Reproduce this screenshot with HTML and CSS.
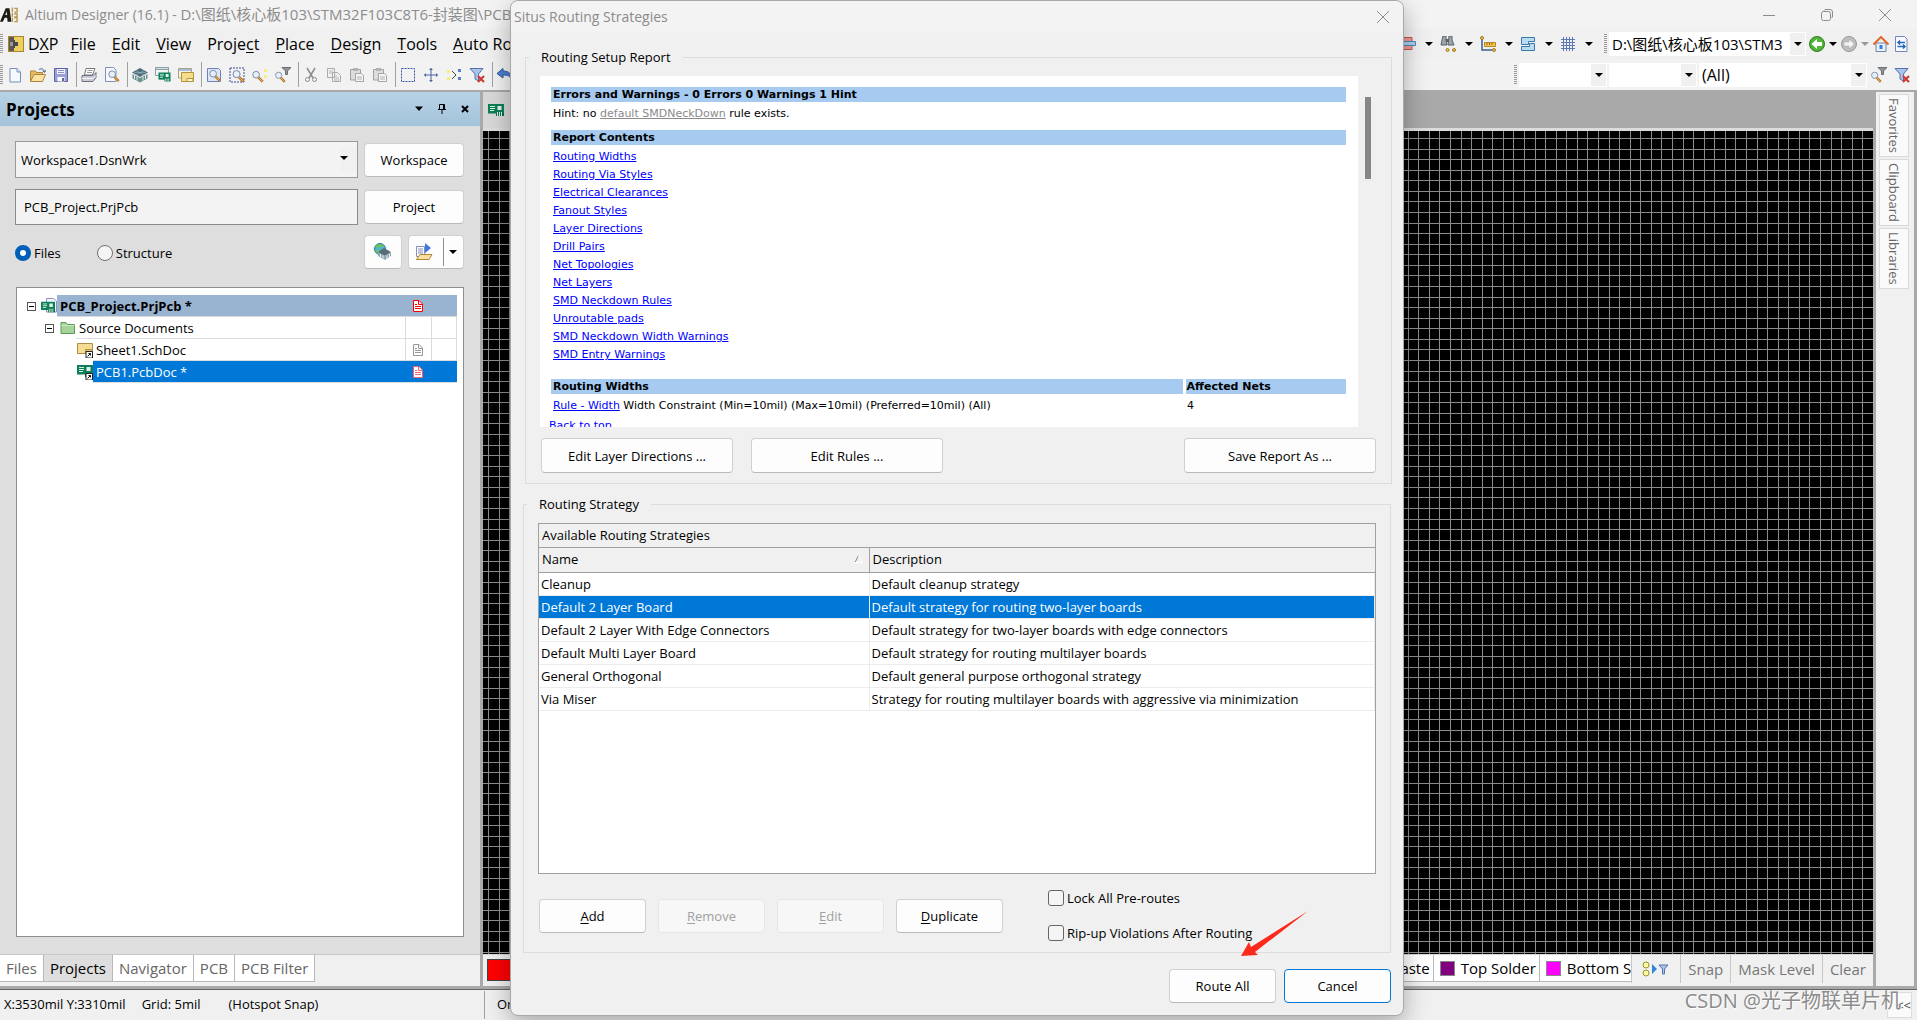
FILE: index.html
```html
<!DOCTYPE html>
<html lang="en">
<head>
    <meta charset="UTF-8">
    <meta name="viewport" content="width=device-width, initial-scale=1">
    <title>Altium Designer (16.1)</title>
    <link rel="stylesheet" href="styles.css">
</head>
<body>
    <!-- icon set -->
    <svg class="sprite" aria-hidden="true">
        <symbol id="i-new" viewBox="0 0 16 16"><path d="M3 1.500h7l3.500 3.500v10H3z" fill="#f4f8ff" stroke="#7a8db8"/><path d="M10 1.500V5h3.500" fill="#dbe5f7" stroke="#7a8db8"/></symbol>
        <symbol id="i-open" viewBox="0 0 16 16"><path d="M.5 14V4h5l1 1.500h6V8" fill="#e6bd66" stroke="#b08538"/><path d="M.5 14.500 4 7.500h11.500l-3 7z" fill="#fbe3a6" stroke="#b08538"/><path d="M9 2.500c3-1.500 5-.5 5.500 2.500M12.500 3.500l2 2 1.500-2.500" fill="none" stroke="#4c6e8f"/></symbol>
        <symbol id="i-save" viewBox="0 0 16 16"><path d="M1.500 1.500h13v13h-13z" fill="#9a9fd6" stroke="#5c61a3"/><path d="M4 2h8v5H4z" fill="#f3f4fb"/><path d="M5 3.500h6M5 5.500h6" stroke="#8d92c7"/><path d="M4.500 10h7v4.500h-7z" fill="#fff"/><path d="M9 11h2v3H9z" fill="#5c61a3"/></symbol>
        <symbol id="i-print" viewBox="0 0 16 16"><path d="M5 1.500h9L11.500 8h-8z" fill="#fff" stroke="#77777f"/><path d="M6.500 3.500h5M6 5.500h5" stroke="#999"/><path d="M1 8.500h11l3-3v5l-3 4H1z" fill="#c9ccd6" stroke="#6f727c"/><path d="M1 11.500h11l3-3" fill="none" stroke="#f5f5f5"/></symbol>
        <symbol id="i-lens" viewBox="0 0 16 16"><path d="m9.500 9.500 5 5" stroke="#b5762a" stroke-width="3"/><path d="m9.500 9.500 4.500 4.500" stroke="#f2bc62"/><circle cx="7" cy="6.500" r="3.800" fill="#e6f1fb" stroke="#70809a"/></symbol>
        <symbol id="i-preview" viewBox="0 0 16 16"><path d="M1.500.5h8L12 3v11.500H1.500z" fill="#f7f9ff" stroke="#8390bb"/><use href="#i-lens" x="2" y="1" width="14" height="15"/></symbol>
        <symbol id="i-stack" viewBox="0 0 16 16"><path d="m8 1 8 4.500L8 10 0 5.500z" fill="#4d6b7b"/><path d="M.5 7 8 11v4.500l-7.500-4zM15.500 7 8 11v4.500l7.500-4z" fill="#6d9290"/><path d="M2.500 8v4M5 9.500v4M11 9.500v4M13.500 8v4" stroke="#d9e8e6"/><path d="m4 3.500 8 4.500M12 3.500 4 8M2 5.500h12" stroke="#8fb0bd" stroke-width=".7"/></symbol>
        <symbol id="i-board" viewBox="0 0 16 16"><path d="M0 2h16v9.500H0z" fill="#0d7e57"/><path d="M2 4.500h5M2 6.500h5M2 8.500h4" stroke="#d7f4e3"/><path d="M9.500 4h4v4h-4z" fill="#e1f0e6"/><path d="M8 11h8v3H8z" fill="#0a6849"/><path d="M9.500 10v4M11.500 10v4M13.500 10v4" stroke="#d7f4e3"/></symbol>
        <symbol id="i-pcbview" viewBox="0 0 16 16"><path d="M.5.5h13v8H.5z" fill="#f2f5f5" stroke="#8fa0a5"/><path d="M.5.500h13v2H.5z" fill="#cfdde6" stroke="#8fa0a5"/><use href="#i-board" x="3" y="4" width="13" height="12"/></symbol>
        <symbol id="i-sheets" viewBox="0 0 16 16"><path d="M.5 1.500h13V11H.5z" fill="#f7f4e4" stroke="#a7a08a"/><path d="M1 2h12v2H1z" fill="#a9bfd6"/><path d="M3.500 5.500h12v9h-12z" fill="#f5dd8c" stroke="#b3943a"/><path d="M9 11.500h6v3H9z" fill="#fff6cf" stroke="#b3943a"/></symbol>
        <symbol id="i-zoomdoc" viewBox="0 0 16 16"><path d="M1.500 1.500h11l2 2v11h-13z" fill="#dbe6f7" stroke="#6f84b5"/><use href="#i-lens" x="1" y="1" width="14" height="14"/></symbol>
        <symbol id="i-zoomsel" viewBox="0 0 16 16"><path d="M1 1h14v14H1z" fill="none" stroke="#3b4f96" stroke-dasharray="2 1"/><use href="#i-lens" x="1" y="1" width="15" height="15"/></symbol>
        <symbol id="i-zoomobj" viewBox="0 0 16 16"><use href="#i-lens" x="-2" y="2" width="14" height="14"/><path d="M12 2h3v3h-3zM12 8h3v3h-3z" fill="#f6ef7e"/></symbol>
        <symbol id="i-zoomfilter" viewBox="0 0 16 16"><path d="M7 .5h9L12.500 4v3.500l-2 0V4z" fill="#8f9499" stroke="#6c7075"/><use href="#i-lens" x="-2" y="3" width="13" height="13"/></symbol>
        <symbol id="i-cut" viewBox="0 0 16 16"><path d="m4 1 6 10M12 1 6 11" stroke="#8c8c8c" stroke-width="1.500"/><circle cx="4.500" cy="12.500" r="2" fill="none" stroke="#8c8c8c"/><circle cx="11.500" cy="12.500" r="2" fill="none" stroke="#8c8c8c"/></symbol>
        <symbol id="i-copy" viewBox="0 0 16 16"><path d="M1.500 1.500h7v9h-7zM6.500 5.500h5l3 3v6h-8z" fill="#f1f1f1" stroke="#ababab"/><path d="M3 4h4M3 6h3M8 9h3M8 11h5M8 13h5" stroke="#b5b5b5"/></symbol>
        <symbol id="i-paste" viewBox="0 0 16 16"><path d="M1.500 2.500h10V13h-10z" fill="#ddd" stroke="#a0a0a0"/><path d="M4 1h5v3H4z" fill="#b3b3b3"/><path d="M6.500 6.500h6l2 2v6h-8z" fill="#f4f4f4" stroke="#a5a5a5"/><path d="M8 10h5M8 12h5" stroke="#b5b5b5"/></symbol>
        <symbol id="i-select" viewBox="0 0 16 16"><path d="M1.500 1.500h13v13h-13z" fill="none" stroke="#3d55a0" stroke-dasharray="2 1"/></symbol>
        <symbol id="i-move" viewBox="0 0 16 16"><path d="M8 1.500v13M1.500 8h13" stroke="#4a62a8"/><path d="m8 1-2 2h4zM8 15l-2-2h4zM1 8l2-2v4zM15 8l-2-2v4z" fill="#4a62a8"/></symbol>
        <symbol id="i-desel" viewBox="0 0 16 16"><path d="M1 3h3v3H1zM1 10h3v3H1z" fill="#f6ef7e"/><path d="m6 4 4 4-4 4" fill="none" stroke="#444"/><path d="M12 2h3v3h-3zM12 10h3v3h-3z" fill="#5b7fc0"/></symbol>
        <symbol id="i-nofilter" viewBox="0 0 16 16"><path d="M1 1.500h13L9.500 7v7L6 12V7z" fill="#a9c4ea" stroke="#5472ad"/><path d="m9 9 6 6M15 9l-6 6" stroke="#d2352c" stroke-width="2"/></symbol>
        <symbol id="i-undo" viewBox="0 0 16 16"><path d="M0 6.500 6 1.500V4c6 0 9 3 9 9-2-4-4-5-9-5v3z" fill="#4c7ed0" stroke="#2d5aa5"/></symbol>
        <symbol id="i-align" viewBox="0 0 16 16"><path d="M0 1.500h12v12H0z" fill="#f09a94" stroke="#c8534e"/><path d="M0 5.500h15.500v4H0z" fill="#a9d1ee" stroke="#4b8ab8"/></symbol>
        <symbol id="i-find" viewBox="0 0 16 16"><path d="M3 0h3v4l1 5H1l1-5zM9 0h3v4l2 5H8z" fill="#9aa4aa" stroke="#59636a"/><path d="M6 3h3v3H6z" fill="#59636a"/><circle cx="7.500" cy="14" r="1.500" fill="#e8c15a" stroke="#a37a1c"/><circle cx="14" cy="14" r="1.500" fill="#e8c15a" stroke="#a37a1c"/></symbol>
        <symbol id="i-dim" viewBox="0 0 16 16"><path d="M2 3v11h11" fill="none" stroke="#3f5f94" stroke-width="1.500"/><path d="M4.500 6.500h11v4h-11z" fill="#f6c84f" stroke="#b58722"/><path d="M7 7v2M9.500 7v2M12 7v2" stroke="#8a6412"/><circle cx="2" cy="2" r="1.500" fill="#e8c15a" stroke="#a37a1c"/><circle cx="14" cy="14" r="1.500" fill="#e8c15a" stroke="#a37a1c"/></symbol>
        <symbol id="i-room" viewBox="0 0 16 16"><path d="M1.500 1.500h13v4h-6v3h-7zM14.500 7.500v7h-13v-4h8v-3z" fill="#b7dcf2" stroke="#3f78a8"/></symbol>
        <symbol id="i-grid" viewBox="0 0 16 16"><path d="M3.500 1v14M6.500 1v14M9.500 1v14M12.500 1v14M1 3.500h14M1 6.500h14M1 9.500h14M1 12.500h14" stroke="#5a78b4"/></symbol>
        <symbol id="i-back" viewBox="0 0 16 16"><circle cx="8" cy="8" r="7.500" fill="#52b43a" stroke="#2c7f1d"/><path d="M2.500 8 8 3v3h5v4H8v3z" fill="#fff"/></symbol>
        <symbol id="i-fwd" viewBox="0 0 16 16"><circle cx="8" cy="8" r="7.500" fill="#bdbdbd" stroke="#999"/><path d="M13.500 8 8 3v3H3v4h5v3z" fill="#f3f3f3" stroke="#a5a5a5" stroke-width=".5"/></symbol>
        <symbol id="i-home" viewBox="0 0 16 16"><path d="M3 7h10v8.500H3z" fill="#eaf1fa" stroke="#6c86a8"/><path d="M6.500 9h3v4h-3z" fill="#2c7fe0"/><path d="M.5 8.500 8 1l7.500 7.500" fill="none" stroke="#e0682b" stroke-width="2"/></symbol>
        <symbol id="i-sync" viewBox="0 0 16 16"><path d="M2.500.500h9l2.500 2.500v12.500h-11.500z" fill="#f6f9ff" stroke="#7588b5"/><path d="M5 6.500h7M7 4.500l-2 2 2 2M4.500 10.500H12M10 8.500l2 2-2 2" fill="none" stroke="#2868b8" stroke-width="1.500"/></symbol>
        <symbol id="i-doc" viewBox="0 0 10 12"><path d="M.500.500H6L9.500 4v7.500h-9z" fill="#fff" stroke="currentColor"/><path d="M5.500 1v3.500H9M2 4.500h2M2 6.500h6M2 8.500h6" fill="none" stroke="currentColor"/></symbol>
        <symbol id="i-folder" viewBox="0 0 16 16"><path d="M1 13.500V2.500h5l1.500 2h7v9z" fill="#a5d39a" stroke="#5f9a5c"/><path d="M1.500 5.500h13" stroke="#cdebc5"/></symbol>
        <symbol id="i-sch" viewBox="0 0 16 16"><path d="M.5 1.500h15v10H.5z" fill="#f4dd92" stroke="#ad8f46"/><path d="M8.500 7.500h7v4h-7z" fill="#e6c56a" stroke="#ad8f46"/><use href="#i-link"/></symbol>
        <symbol id="i-pcb" viewBox="0 0 16 16"><use href="#i-board" x="0" y="-1" width="16" height="16"/><use href="#i-link"/></symbol>
        <symbol id="i-link" viewBox="0 0 16 16"><path d="M9 9.500h6.500V16H9z" fill="#fff" stroke="#222"/><path d="M10.500 14.500 13.500 11.500M11.500 11.500h2v2" fill="none" stroke="#111"/></symbol>
        <symbol id="i-prj" viewBox="0 0 16 16"><path d="M5.500.500h7L15.500 3v11h-10z" fill="#f4f6ff" stroke="#8a93bb"/><use href="#i-board" x="0" y="2" width="14" height="14"/></symbol>
        <symbol id="i-vault" viewBox="0 0 18 18"><circle cx="6" cy="6" r="5.500" fill="#52b6c4" stroke="#2b7e90"/><path d="M2 4c3-3 4 0 7-2M2 8c2 1 3-1 4 2" stroke="#79c34c" stroke-width="2" fill="none"/><path d="m10 5 7 4-6 4-7-4z" fill="#586d78"/><path d="m4 9 7 4v4l-7-4zM17 9l-6 4v4l6-4z" fill="#8fa9b2"/><path d="M6.500 11v3M9 12.500v3M13 12.500v3M15.500 11v3" stroke="#e8f0f2"/></symbol>
        <symbol id="i-export" viewBox="0 0 18 18"><path d="M1.500 3.500h8v10h-8z" fill="#fff" stroke="#8390bb"/><path d="M3 6h5M3 8h5M3 10h5" stroke="#8390bb"/><path d="m10 0 6 5-6 5z" fill="#3f78e0"/><path d="M1.500 16.500 5 11.500h12l-3 5z" fill="#fbe0a0" stroke="#b08538"/></symbol>
        <symbol id="i-mask" viewBox="0 0 28 16"><circle cx="4" cy="4" r="3" fill="#fbfba5" stroke="#97972a"/><circle cx="4" cy="12" r="3" fill="#fbfba5" stroke="#97972a"/><path d="m10 3 5 5-5 5z" fill="#2f86d8"/><path d="M17 4h9l-3.500 4v5h-2V8z" fill="#a9c4ea" stroke="#5472ad"/></symbol>
    </svg>

    <div class="app">
        <header class="titlebar">
            <svg class="logo" viewBox="0 0 20 18"><path d="M0 16 6 2h4l2 14H8l-.5-4H5l-2 4z" fill="#1d1a12"/><path d="M5.500 9h2L7 5z" fill="#f3f3f3"/><path d="M13 1v5M15 2h3v4h-3M13 7v4M15 8h3v3h-3M13 12v4M15 12h3v4h-3" fill="none" stroke="#b79850" stroke-width="1.500"/></svg>
            <h1>Altium Designer (16.1) - <span>D:\图纸\核心板103\STM32F103C8T6-封装图\PCB</span></h1>
            <div class="win-controls">
                <button aria-label="Minimize"><svg viewBox="0 0 12 12"><path d="M0 6.500h12"/></svg></button>
                <button aria-label="Restore"><svg viewBox="0 0 12 12"><rect x=".5" y="2.500" width="9" height="9" rx="2"/><path d="M3 1.500Q3.500.5 5 .5h4q2.500 0 2.500 2.500v4q0 1.500-1 2"/></svg></button>
                <button aria-label="Close"><svg viewBox="0 0 12 12"><path d="m0 0 12 12M12 0 0 12"/></svg></button>
            </div>
        </header>

        <div class="menubar">
            <span class="grip"></span>
            <svg class="dxp-icon" viewBox="0 0 16 16"><path d="M0 0h16v16H0z" fill="#a8862a"/><path d="M1 1h5v14H1z" fill="#5a5a5a"/><path d="M6 1h9v14H6z" fill="#edcf60"/><path d="M2 6h3v4H2z" fill="#999"/><path d="M5 4h2v2h3v4H7v2H5z" fill="#4a4a4a"/></svg>
            <nav class="menu">
                <a href="#">D<u>X</u>P</a>
                <a href="#"><u>F</u>ile</a>
                <a href="#"><u>E</u>dit</a>
                <a href="#"><u>V</u>iew</a>
                <a href="#">Proje<u>c</u>t</a>
                <a href="#"><u>P</u>lace</a>
                <a href="#"><u>D</u>esign</a>
                <a href="#"><u>T</u>ools</a>
                <a href="#"><u>A</u>uto Route</a>
            </nav>
            <div class="tools tools-wide">
                <button class="drop" aria-label="Align"><svg><use href="#i-align"/></svg><i class="caret"></i></button>
                <button class="drop" aria-label="Find"><svg><use href="#i-find"/></svg><i class="caret"></i></button>
                <button class="drop" aria-label="Dimension"><svg><use href="#i-dim"/></svg><i class="caret"></i></button>
                <button class="drop" aria-label="Room"><svg><use href="#i-room"/></svg><i class="caret"></i></button>
                <button class="drop" aria-label="Grid"><svg><use href="#i-grid"/></svg><i class="caret"></i></button>
            </div>
            <span class="grip"></span>
            <span class="combo combo-path"><select aria-label="Document path"><option>D:\图纸\核心板103\STM3</option></select></span>
            <div class="nav-tools">
                <button aria-label="Back"><svg><use href="#i-back"/></svg></button><i class="caret"></i>
                <button aria-label="Forward"><svg><use href="#i-fwd"/></svg></button><i class="caret dim"></i>
                <button aria-label="Home"><svg><use href="#i-home"/></svg></button>
                <button aria-label="Refresh"><svg><use href="#i-sync"/></svg></button>
            </div>
        </div>

        <div class="toolbar">
            <span class="grip"></span>
            <div class="tools">
                <button aria-label="New"><svg><use href="#i-new"/></svg></button>
                <button aria-label="Open"><svg><use href="#i-open"/></svg></button>
                <button aria-label="Save"><svg><use href="#i-save"/></svg></button>
                <span class="sep"></span>
                <button aria-label="Print"><svg><use href="#i-print"/></svg></button>
                <button aria-label="Preview"><svg><use href="#i-preview"/></svg></button>
                <span class="sep"></span>
                <button aria-label="Devices"><svg><use href="#i-stack"/></svg></button>
                <button aria-label="PCB view"><svg><use href="#i-pcbview"/></svg></button>
                <button aria-label="Sheets"><svg><use href="#i-sheets"/></svg></button>
                <span class="sep"></span>
                <button aria-label="Fit document"><svg><use href="#i-zoomdoc"/></svg></button>
                <button aria-label="Zoom area"><svg><use href="#i-zoomsel"/></svg></button>
                <button aria-label="Zoom selected"><svg><use href="#i-zoomobj"/></svg></button>
                <button aria-label="Zoom filtered"><svg><use href="#i-zoomfilter"/></svg></button>
                <span class="sep"></span>
                <button aria-label="Cut"><svg><use href="#i-cut"/></svg></button>
                <button aria-label="Copy"><svg><use href="#i-copy"/></svg></button>
                <button aria-label="Paste"><svg><use href="#i-paste"/></svg></button>
                <button aria-label="Rubber stamp"><svg><use href="#i-paste"/></svg></button>
                <span class="sep"></span>
                <button aria-label="Select"><svg><use href="#i-select"/></svg></button>
                <button aria-label="Move"><svg><use href="#i-move"/></svg></button>
                <button aria-label="Deselect"><svg><use href="#i-desel"/></svg></button>
                <button aria-label="Clear filter"><svg><use href="#i-nofilter"/></svg></button>
                <span class="sep"></span>
                <button aria-label="Undo"><svg><use href="#i-undo"/></svg></button>
            </div>
            <span class="grip grip-right"></span>
            <span class="combo combo-small"><select aria-label="Filter one"><option></option></select></span>
            <span class="combo combo-small"><select aria-label="Filter two"><option></option></select></span>
            <span class="combo combo-all"><select aria-label="Filter"><option>(All)</option></select></span>
            <div class="tools filter-tools">
                <button aria-label="Zoom filtered"><svg><use href="#i-zoomfilter"/></svg></button>
                <button aria-label="Clear filter"><svg><use href="#i-nofilter"/></svg></button>
            </div>
        </div>

        <main class="workspace">
            <aside class="panel">
                <div class="panel-head">
                    <h2>Projects</h2>
                    <button aria-label="Panel menu"><svg viewBox="0 0 10 10"><path d="M1 2.500h8L5 7z" fill="#000"/></svg></button>
                    <button aria-label="Pin"><svg viewBox="0 0 10 10"><path d="M2.500.500h5v5h-5zM6.500.500v5M1 5.500h8M5 6v4" fill="none" stroke="#000"/></svg></button>
                    <button aria-label="Close panel"><svg viewBox="0 0 10 10"><path d="m2 2 6 6M8 2 2 8" stroke="#000" stroke-width="2"/></svg></button>
                </div>
                <div class="panel-body">
                    <div class="panel-form">
                        <span class="combo combo-box"><select aria-label="Workspace file"><option>Workspace1.DsnWrk</option></select></span>
                        <button class="btn">Workspace</button>
                        <input class="field" type="text" value="PCB_Project.PrjPcb" aria-label="Project file">
                        <button class="btn">Project</button>
                        <div class="radios">
                            <label><input type="radio" name="mode" checked>Files</label>
                            <label><input type="radio" name="mode">Structure</label>
                        </div>
                        <div class="icon-btns">
                            <button class="btn" aria-label="Vault"><svg><use href="#i-vault"/></svg></button>
                            <button class="btn split" aria-label="Open project"><svg><use href="#i-export"/></svg><span class="split-line"></span><i class="caret"></i></button>
                        </div>
                    </div>
                    <ul class="tree">
                        <li class="node level-0">
                            <span class="toggle"></span><svg class="node-icon"><use href="#i-prj"/></svg>
                            <span class="node-row current"><b>PCB_Project.PrjPcb *</b><i class="col red"><svg><use href="#i-doc"/></svg></i><i class="col-end"></i></span>
                        </li>
                        <li class="node level-1">
                            <span class="toggle"></span><svg class="node-icon"><use href="#i-folder"/></svg>
                            <span class="node-row"><span>Source Documents</span><i class="col"></i><i class="col-end"></i></span>
                        </li>
                        <li class="node level-2">
                            <svg class="node-icon"><use href="#i-sch"/></svg>
                            <span class="node-row"><span>Sheet1.SchDoc</span><i class="col gray"><svg><use href="#i-doc"/></svg></i><i class="col-end"></i></span>
                        </li>
                        <li class="node level-2">
                            <svg class="node-icon"><use href="#i-pcb"/></svg>
                            <span class="node-row selected"><span>PCB1.PcbDoc *</span><i class="col pink"><svg><use href="#i-doc"/></svg></i><i class="col-end"></i></span>
                        </li>
                    </ul>
                </div>
                <div class="panel-tabs">
                    <button>Files</button>
                    <button class="active">Projects</button>
                    <button>Navigator</button>
                    <button>PCB</button>
                    <button>PCB Filter</button>
                </div>
            </aside>

            <section class="editor">
                <div class="doc-tabs"><span class="doc-tab"><svg><use href="#i-board"/></svg></span></div>
                <div class="canvas"></div>
                <div class="layer-bar">
                    <span class="layer-current"></span>
                    <div class="layers">
                        <button class="layer">Bottom Paste</button>
                        <button class="layer"><i class="swatch purple"></i>Top Solder</button>
                        <button class="layer layer-cut"><i class="swatch magenta"></i>Bottom S</button>
                    </div>
                    <div class="layer-actions">
                        <button aria-label="Mask"><svg class="mask-icon"><use href="#i-mask"/></svg></button>
                        <button>Snap</button>
                        <button>Mask Level</button>
                        <button>Clear</button>
                    </div>
                </div>
            </section>

            <aside class="side-tabs">
                <button>Favorites</button>
                <button>Clipboard</button>
                <button>Libraries</button>
            </aside>
        </main>

        <footer class="statusbar">
            <div class="coords"><span>X:3530mil Y:3310mil</span><span>Grid: 5mil</span><span>(Hotspot Snap)</span></div>
            <span class="status-msg">Or</span>
            <button class="more">&lt;&lt;</button>
        </footer>
    </div>

    <div class="watermark">CSDN @光子物联单片机</div>

    <div class="dialog" role="dialog" aria-labelledby="dlg-title">
        <div class="dialog-title">
            <h2 id="dlg-title">Situs Routing Strategies</h2>
            <button aria-label="Close"><svg viewBox="0 0 12 12"><path d="m0 0 12 12M12 0 0 12"/></svg></button>
        </div>
        <div class="dialog-body">
            <fieldset class="report-group">
                <legend>Routing Setup Report</legend>
                <div class="report-wrap">
                    <div class="report">
                        <h3>Errors and Warnings - 0 Errors 0 Warnings 1 Hint</h3>
                        <p>Hint: no <a class="muted" href="#">default SMDNeckDown</a> rule exists.</p>
                        <h3>Report Contents</h3>
                        <ul>
                            <li><a href="#">Routing Widths</a></li>
                            <li><a href="#">Routing Via Styles</a></li>
                            <li><a href="#">Electrical Clearances</a></li>
                            <li><a href="#">Fanout Styles</a></li>
                            <li><a href="#">Layer Directions</a></li>
                            <li><a href="#">Drill Pairs</a></li>
                            <li><a href="#">Net Topologies</a></li>
                            <li><a href="#">Net Layers</a></li>
                            <li><a href="#">SMD Neckdown Rules</a></li>
                            <li><a href="#">Unroutable pads</a></li>
                            <li><a href="#">SMD Neckdown Width Warnings</a></li>
                            <li><a href="#">SMD Entry Warnings</a></li>
                        </ul>
                        <table>
                            <tr><th>Routing Widths</th><th>Affected Nets</th></tr>
                            <tr><td><a href="#">Rule - Width</a> Width Constraint (Min=10mil) (Max=10mil) (Preferred=10mil) (All)</td><td>4</td></tr>
                        </table>
                        <a class="to-top" href="#">Back to top</a>
                    </div>
                    <div class="scrollbar"><span></span></div>
                </div>
                <div class="report-btns">
                    <button class="btn">Edit Layer Directions ...</button>
                    <button class="btn">Edit Rules ...</button>
                    <button class="btn">Save Report As ...</button>
                </div>
            </fieldset>

            <fieldset class="strategy-group">
                <legend>Routing Strategy</legend>
                <div class="strategies">
                    <table>
                        <caption>Available Routing Strategies</caption>
                        <thead>
                            <tr><th><span>Name</span><svg viewBox="0 0 10 8"><path d="m1 7.500 3.500-7" stroke="#888"/><path d="m4.500.500 4 7h-8" fill="none" stroke="#fff"/></svg></th><th>Description</th></tr>
                        </thead>
                        <tbody>
                            <tr><td>Cleanup</td><td>Default cleanup strategy</td></tr>
                            <tr class="selected"><td>Default 2 Layer Board</td><td>Default strategy for routing two-layer boards</td></tr>
                            <tr><td>Default 2 Layer With Edge Connectors</td><td>Default strategy for two-layer boards with edge connectors</td></tr>
                            <tr><td>Default Multi Layer Board</td><td>Default strategy for routing multilayer boards</td></tr>
                            <tr><td>General Orthogonal</td><td>Default general purpose orthogonal strategy</td></tr>
                            <tr><td>Via Miser</td><td>Strategy for routing multilayer boards with aggressive via minimization</td></tr>
                        </tbody>
                    </table>
                </div>
                <div class="strategy-btns">
                    <button class="btn"><u>A</u>dd</button>
                    <button class="btn" disabled><u>R</u>emove</button>
                    <button class="btn" disabled><u>E</u>dit</button>
                    <button class="btn"><u>D</u>uplicate</button>
                    <div class="checks">
                        <label><input type="checkbox">Lock All Pre-routes</label>
                        <label><input type="checkbox">Rip-up Violations After Routing</label>
                    </div>
                </div>
            </fieldset>

            <div class="dialog-actions">
                <svg class="arrow" viewBox="0 0 68 46"><path d="M0 45 8 31l2 5L67 0 14 41l3 3z" fill="#fb2a1c"/></svg>
                <button class="btn">Route All</button>
                <button class="btn default">Cancel</button>
            </div>
        </div>
    </div>
</body>
</html>
```

FILE: styles.css
```css
:root {
    --ui: "Open Sans", "Noto Sans CJK SC", sans-serif;
    --face: #f0f0f0;
    --gray: #a9a9a9;
    --blue: #0078d7;
    --band: #a6caf0;
}

* {
    box-sizing: border-box;
}

body {
    margin: 0;
    height: 100vh;
    overflow: hidden;
    position: relative;
    font-family: var(--ui);
    font-size: 13px;
    color: #000;
    background: var(--face);
}

h1, h2, h3, p, ul {
    margin: 0;
    padding: 0;
    font-weight: normal;
}

ul {
    list-style: none;
}

button, select, input {
    font: inherit;
    color: inherit;
}

button {
    padding: 0;
    border: 0;
    background: none;
}

.sprite {
    position: absolute;
    width: 0;
    height: 0;
}

.app {
    height: 100%;
    display: flex;
    flex-direction: column;
}

/* title bar */
.titlebar {
    height: 29px;
    display: flex;
    align-items: center;
    background: #f3f3f3;
    color: #8c8c8c;
}

.titlebar h1 {
    flex: 1;
    margin-left: 6px;
    font-size: 14px;
    line-height: 28px;
    white-space: nowrap;
}

.titlebar h1 span {
    font-size: 15px;
}

.logo {
    width: 19px;
    height: 18px;
}

.win-controls {
    display: flex;
    gap: 46px;
    margin-right: 26px;
}

.win-controls svg, .dialog-title svg {
    display: block;
    width: 12px;
    height: 12px;
    fill: none;
    stroke: #8c8c8c;
}

/* menu and tool bars */
.menubar, .toolbar {
    display: flex;
    align-items: center;
    height: 30px;
}

.toolbar {
    height: 31px;
    background: #f2f2f2;
}

.grip {
    width: 3px;
    height: 20px;
    background: repeating-linear-gradient(#9a9a9a 0 1px, var(--face) 1px 2px);
}

.dxp-icon {
    width: 16px;
    height: 16px;
    margin-left: 5px;
}

.menu {
    flex: 1;
    display: flex;
    gap: 16px;
    margin-left: 4px;
    font-size: 16px;
    line-height: 28px;
    white-space: nowrap;
}

.menu a:first-child {
    margin-right: -4px;
}

.menu a {
    color: #000;
    text-decoration: none;
}

u {
    text-underline-offset: 2px;
}

.tools, .nav-tools {
    display: flex;
    align-items: center;
}

.tools button {
    width: 23px;
    height: 24px;
    display: flex;
    align-items: center;
    justify-content: center;
}

.tools svg, .nav-tools svg, .doc-tab svg {
    display: block;
    width: 16px;
    height: 16px;
}

.tools .drop {
    width: 40px;
    gap: 9px;
}

.tools-wide {
    margin-right: 8px;
}

.sep {
    width: 1px;
    height: 25px;
    margin-left: 4px;
    background: #a0a0a0;
}

.caret {
    border: 4px solid transparent;
    border-top-color: #000;
    border-bottom: 0;
}

.caret.dim {
    border-top-color: #999;
}

.combo {
    position: relative;
    display: block;
    height: 24px;
    background: #fff;
}

.combo select {
    appearance: none;
    width: 100%;
    height: 100%;
    padding: 0 18px 0 3px;
    border: 0;
    border-radius: 0;
    background: linear-gradient(#f0f0f0, #f0f0f0) right 1px center / 15px 22px no-repeat;
}

.combo::after {
    content: "";
    position: absolute;
    right: 4px;
    top: 10px;
    border: 4px solid transparent;
    border-top-color: #000;
    border-bottom: 0;
    pointer-events: none;
}

.combo-path {
    width: 197px;
    margin-left: 2px;
    font-size: 15px;
}

.nav-tools {
    width: 111px;
    gap: 4px;
    padding-left: 3px;
}

.grip-right {
    margin-left: auto;
    margin-right: 2px;
}

.combo-small {
    width: 88px;
    margin-right: 2px;
}

.combo-all {
    width: 168px;
    font-size: 16px;
}

.filter-tools {
    width: 50px;
}

/* workspace */
.workspace {
    flex: 1;
    display: flex;
    min-height: 0;
    border: solid var(--gray);
    border-width: 2px 3px 3px 0;
}

.panel {
    width: 483px;
    display: flex;
    flex-direction: column;
    background: #dedede;
    border-right: 3px solid var(--gray);
}

.panel-head {
    display: flex;
    align-items: center;
    gap: 13px;
    height: 34px;
    padding: 0 10px 0 6px;
    background: linear-gradient(#b7d2e6, #a3c3db);
}

.panel-head h2 {
    flex: 1;
    font-size: 17px;
    font-weight: bold;
}

.panel-head svg {
    display: block;
    width: 10px;
    height: 10px;
}

.panel-body {
    flex: 1;
    display: flex;
    flex-direction: column;
    padding: 15px 16px 17px 15px;
}

.panel-form {
    display: grid;
    grid-template-columns: 1fr 100px;
    grid-template-rows: 37px 37px 34px;
    gap: 10px 6px;
    align-items: center;
    margin-bottom: 18px;
}

.btn {
    height: 34px;
    border: 1px solid #d0d0d0;
    border-bottom-color: #bababa;
    border-radius: 4px;
    background: #fdfdfd;
}

.btn:disabled {
    color: #a0a0a0;
    background: #f7f7f7;
    border-color: #e6e6e6;
}

.btn.default {
    border-color: var(--blue);
}

.combo-box {
    height: 37px;
    border: 1px solid #999;
}

.combo-box select {
    padding-left: 5px;
    background-color: #f3f3f3;
}

.combo-box::after {
    right: 9px;
    top: 14px;
}

.field {
    width: 100%;
    height: 36px;
    padding: 0 8px;
    border: 1px solid #8a8a8a;
    background: #f3f3f3;
}

.radios {
    display: flex;
    gap: 36px;
    padding-top: 1px;
}

.radios label, .checks label {
    display: flex;
    align-items: center;
    gap: 3px;
}

.radios input {
    appearance: none;
    width: 16px;
    height: 16px;
    margin: 0;
    border: 1px solid #707070;
    border-radius: 50%;
    background: #f5f5f5;
}

.radios input:checked {
    border: 5px solid #005fb8;
    background: #fff;
}

.icon-btns {
    display: flex;
    gap: 6px;
}

.icon-btns .btn {
    width: 38px;
    display: flex;
    align-items: center;
    justify-content: center;
}

.icon-btns .split {
    width: 56px;
}

.icon-btns svg {
    width: 18px;
    height: 18px;
}

.split-line {
    width: 1px;
    height: 28px;
    margin: 0 5px 0 10px;
    background: #8f8f8f;
}

.tree {
    flex: 1;
    padding: 7px 6px 0 0;
    border: 1px solid #8f8f8f;
    background: #fff;
    margin-left: 1px;
}

.node {
    display: flex;
    align-items: center;
    height: 22px;
}

.level-0 {
    padding-left: 10px;
}

.level-1 {
    padding-left: 28px;
}

.level-2 {
    padding-left: 60px;
}

.toggle {
    width: 9px;
    height: 9px;
    margin-right: 5px;
    border: 1px solid #555;
    background: linear-gradient(#000, #000) center / 5px 1px no-repeat;
}

.level-1 .toggle {
    margin-right: 6px;
}

.node-icon {
    width: 16px;
    height: 16px;
}

.node-row {
    flex: 1;
    display: flex;
    align-items: center;
    height: 22px;
    padding-left: 3px;
    border-bottom: 1px solid #dcdcdc;
}

.node-row > :first-child {
    flex: 1;
}

.col {
    width: 26px;
    height: 100%;
    display: flex;
    align-items: center;
    padding-left: 7px;
    border-left: 1px solid #dcdcdc;
}

.col-end {
    width: 26px;
    height: 100%;
    border: solid #dcdcdc;
    border-width: 0 1px;
}

.col svg {
    width: 10px;
    height: 12px;
}

.red {
    color: #f00;
}

.gray {
    color: #999;
}

.pink {
    color: #f2606c;
}

.current {
    background: #99b4d1;
}

.selected {
    background: var(--blue);
    color: #fff;
}

.current .col, .current .col-end, .node-row.selected .col, .node-row.selected .col-end {
    border-color: transparent;
}

.panel-tabs {
    display: flex;
    height: 32px;
    padding-bottom: 4px;
    background: var(--face);
    border-top: 1px solid #c8c8c8;
    font-size: 15px;
    color: #666;
}

.panel-tabs button {
    padding: 0 6px;
    background: #fff;
    border: solid #b8b8b8;
    border-width: 0 1px 1px 0;
}

.panel-tabs .active {
    background: #dedede;
    color: #000;
}

.editor {
    flex: 1;
    min-width: 0;
    display: flex;
    flex-direction: column;
}

.doc-tabs {
    height: 39px;
    background: var(--gray);
    border-bottom: 3px solid #dcdcdc;
}

.doc-tab {
    display: flex;
    align-items: center;
    width: 200px;
    height: 36px;
    padding-left: 5px;
    background: #d8d8d8;
}

/* board grid: seven lines in every 74px, both ways */
.canvas {
    --line: #8e8b8e;
    flex: 1;
    background:
        linear-gradient(90deg, var(--line) 1px, transparent 1px 11px, var(--line) 11px 12px, transparent 12px 21px, var(--line) 21px 22px, transparent 22px 32px, var(--line) 32px 33px, transparent 33px 42px, var(--line) 42px 43px, transparent 43px 53px, var(--line) 53px 54px, transparent 54px 63px, var(--line) 63px 64px, transparent 64px) 5px 7px / 74px 74px,
        linear-gradient(var(--line) 1px, transparent 1px 11px, var(--line) 11px 12px, transparent 12px 21px, var(--line) 21px 22px, transparent 22px 32px, var(--line) 32px 33px, transparent 33px 42px, var(--line) 42px 43px, transparent 43px 53px, var(--line) 53px 54px, transparent 54px 63px, var(--line) 63px 64px, transparent 64px) 5px 7px / 74px 74px,
        #000;
}

.layer-bar {
    display: flex;
    height: 32px;
    border-top: 1px solid #d8d8d8;
    background: var(--face);
    font-size: 15px;
}

.layer-current {
    width: 60px;
    height: 22px;
    margin: 4px;
    border: 1px solid #444;
    background: #f00;
}

.layers {
    flex: 1;
    display: flex;
    justify-content: flex-end;
    height: 27px;
}

.layer {
    display: flex;
    align-items: center;
    gap: 6px;
    padding: 0 3px 0 6px;
    white-space: nowrap;
    background: #fff;
    border: solid #b8b8b8;
    border-width: 0 1px 1px 0;
}

.layer-cut {
    padding-right: 0;
    border-right: 0;
}

.swatch {
    flex: none;
    width: 15px;
    height: 15px;
    border: 1px solid #888;
}

.purple {
    background: #800080;
}

.magenta {
    background: #f0f;
}

.layer-actions {
    display: flex;
    height: 28px;
    color: #777;
}

.layer-actions button {
    padding: 0 7px;
    border-left: 1px solid #c8c8c8;
}

.mask-icon {
    display: block;
    width: 28px;
    height: 16px;
    margin: 0 3px;
}

.side-tabs {
    display: flex;
    flex-direction: column;
    gap: 2px;
    width: 41px;
    padding: 2px 5px 0 3px;
    border-left: 3px solid var(--gray);
    background: var(--face);
    color: #666;
}

.side-tabs button {
    writing-mode: vertical-rl;
    padding: 3px 0;
    border: 1px solid #dadada;
    background: #fafafa;
    width: 30px;
}

/* status bar */
.statusbar {
    display: flex;
    align-items: center;
    height: 31px;
    border-top: 1px solid #666;
    padding-right: 5px;
}

.coords {
    display: flex;
    align-items: center;
    width: 485px;
    height: 28px;
    padding: 0 0 3px 4px;
    border-right: 1px solid #a0a0a0;
}

.coords span:nth-child(2) {
    margin: 0 28px 0 16px;
}

.status-msg {
    flex: 1;
    padding: 0 0 3px 12px;
}

.more {
    width: 25px;
    height: 26px;
    border: 1px solid #ddd;
    background: #fafafa;
    text-align: right;
    color: #444;
}

.watermark {
    position: absolute;
    right: 16px;
    bottom: 5px;
    font-size: 20px;
    line-height: 28px;
    color: #8b8b8b;
    text-shadow: 1px 1px #fff;
}

/* dialog */
.dialog {
    position: absolute;
    left: 510px;
    top: 0;
    bottom: 4px;
    width: 894px;
    display: flex;
    flex-direction: column;
    border: 1px solid #a8a8a8;
    border-radius: 8px;
    background: var(--face);
    box-shadow: 0 8px 24px rgba(0, 0, 0, .3);
}

.dialog-title {
    display: flex;
    align-items: center;
    justify-content: space-between;
    height: 31px;
    padding: 0 14px 0 3px;
    border-radius: 8px 8px 0 0;
    background: #f3f3f3;
    color: #8c8c8c;
}

.dialog-title h2 {
    font-size: 14px;
}

.dialog-body {
    flex: 1;
    display: flex;
    flex-direction: column;
    padding: 15px 12px 12px;
}

fieldset {
    margin: 0;
    border: 1px solid #dcdcdc;
    padding: 0 15px;
}

legend {
    margin-left: -12px;
    padding: 0 12px;
    line-height: 20px;
}

.report-group {
    margin: 0 -1px 0 2px;
}

.report-wrap {
    display: flex;
    height: 351px;
    margin: 9px 0 11px -1px;
}

.report {
    flex: 1;
    overflow: hidden;
    padding: 11px 12px 0 11px;
    background: #fff;
    font-family: "DejaVu Sans", sans-serif;
    font-size: 11px;
    line-height: 18px;
}

.report h3, .report th {
    height: 15px;
    padding: 0 2px;
    line-height: 15px;
    font-size: 11px;
    font-weight: bold;
    text-align: left;
    background: var(--band);
}

.report p {
    margin: 3px 2px 7px;
}

.report ul {
    margin: 3px 2px 15px;
}

.report a {
    color: #00f;
}

.report .muted {
    color: #8a8a8a;
}

.report table {
    width: 100%;
    border-collapse: collapse;
}

.report td {
    height: 23px;
    padding: 0 2px;
}

.report th:last-child {
    width: 162px;
    border-left: 3px solid #fff;
    padding-left: 1px;
}

.report td:last-child {
    padding-left: 3px;
}

.report .to-top {
    margin-left: -2px;
}

.scrollbar {
    width: 18px;
    padding: 21px 5px 0 7px;
}

.scrollbar span {
    display: block;
    height: 82px;
    background: #868686;
}

.report-btns {
    display: flex;
    gap: 18px;
    margin-bottom: 10px;
}

.report-btns .btn {
    width: 192px;
    height: 35px;
}

.report-btns .btn:last-child {
    margin-left: auto;
}

.strategy-group {
    flex: 1;
    display: flex;
    flex-direction: column;
    margin-top: 10px;
}

.strategies {
    flex: 1;
    margin: 9px -1px 11px -1px;
    border: 1px solid #a0a0a0;
    background: #fff;
}

.strategies table {
    width: 100%;
    border-collapse: collapse;
}

.strategies caption, .strategies th {
    height: 24px;
    padding: 0 3px;
    line-height: 23px;
    text-align: left;
    font-weight: normal;
    background: var(--face);
    border-bottom: 1px solid #a0a0a0;
}

.strategies th:first-child {
    width: 330px;
    border-right: 1px solid #a0a0a0;
}

.strategies th svg {
    float: right;
    width: 10px;
    height: 8px;
    margin: 7px 2px;
}

.strategies td {
    height: 23px;
    padding: 0 2px;
    line-height: 22px;
    border: solid #ececec;
    border-width: 0 1px 1px 0;
}

.strategy-btns {
    display: flex;
    align-items: center;
    gap: 12px;
    height: 61px;
    margin-bottom: 6px;
}

.strategy-btns .btn, .dialog-actions .btn {
    width: 107px;
}

.checks {
    display: flex;
    flex-direction: column;
    gap: 15px;
    margin-left: 33px;
    line-height: 20px;
}

.checks input {
    appearance: none;
    width: 16px;
    height: 16px;
    margin: 0;
    border: 1px solid #666;
    border-radius: 3px;
    background: #f5f5f5;
}

.dialog-actions {
    position: relative;
    display: flex;
    justify-content: flex-end;
    gap: 8px;
    margin-top: 16px;
}

/* pointer drawn over the Route All button */
.arrow {
    position: absolute;
    right: 82px;
    bottom: 46px;
    width: 68px;
    height: 46px;
}
```
